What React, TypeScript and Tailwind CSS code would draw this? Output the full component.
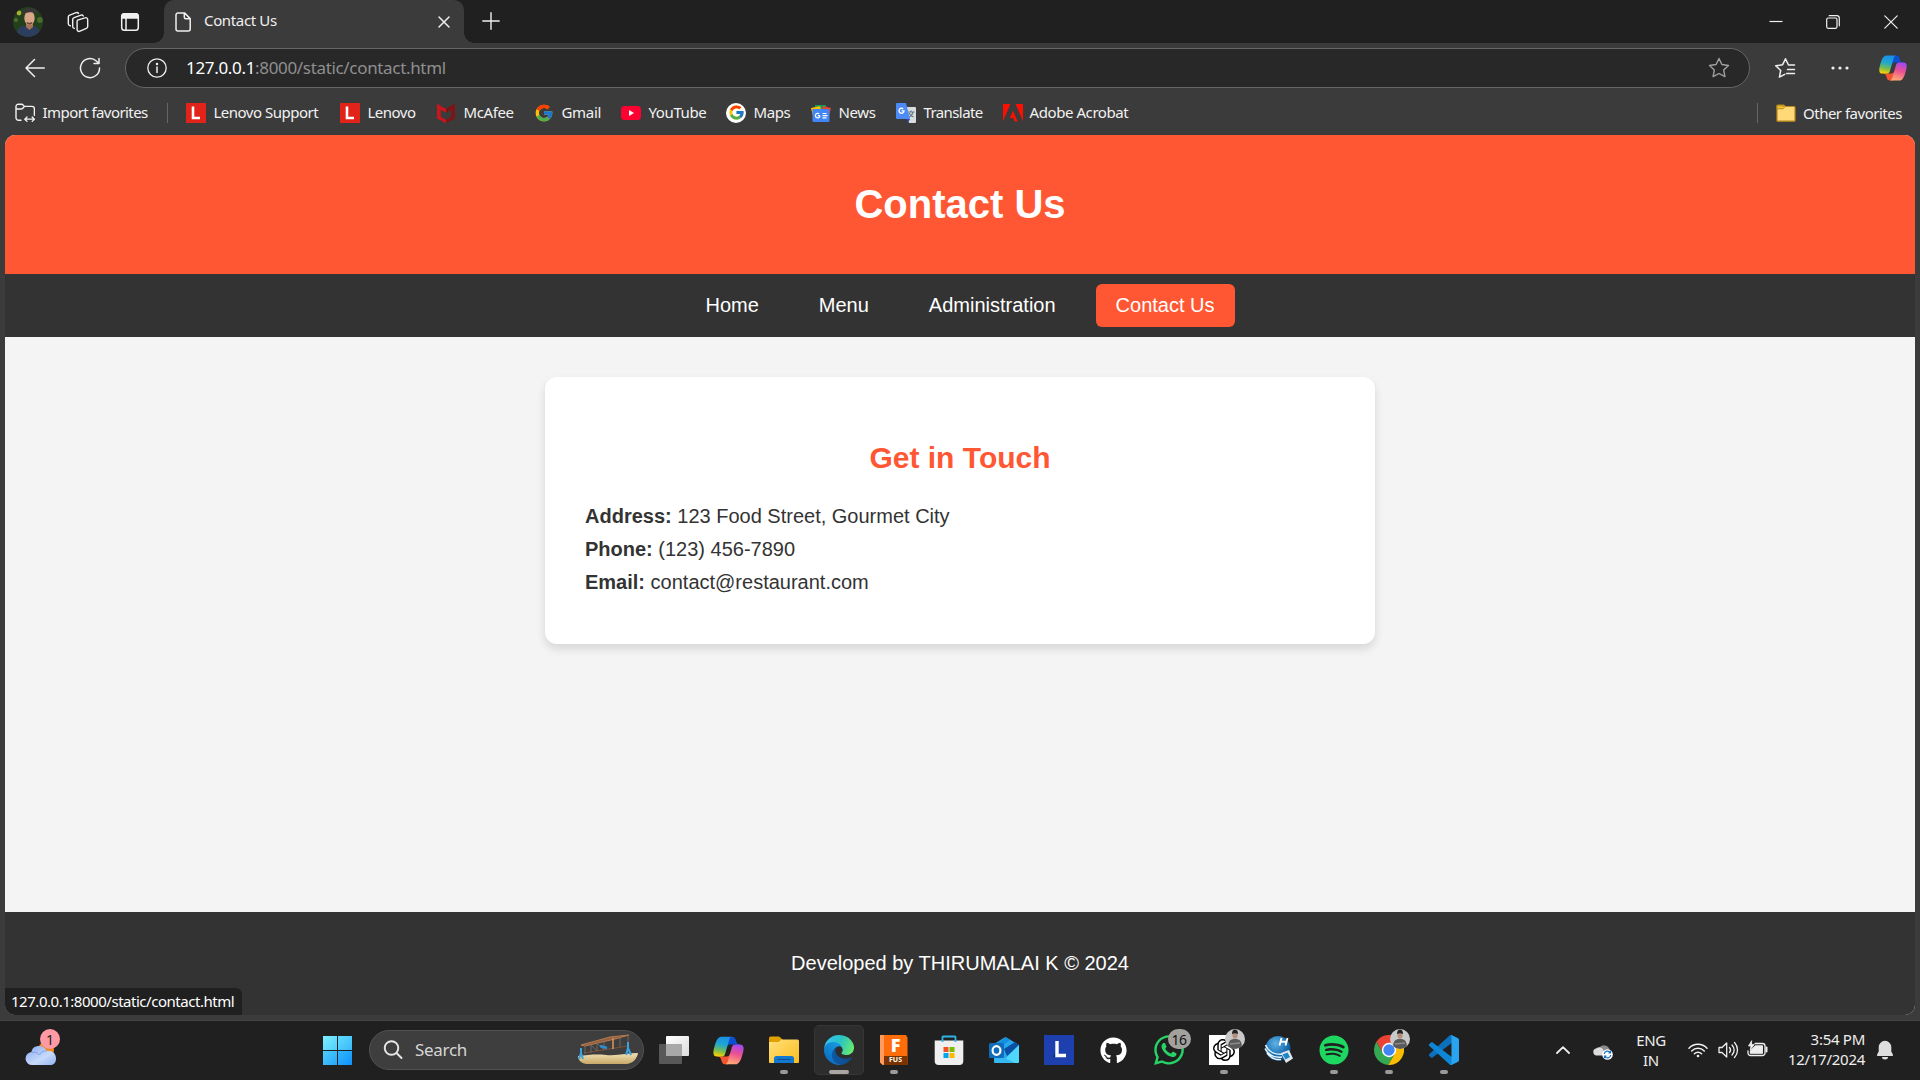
import React from "react";
import { FcGoogle } from "react-icons/fc";
import { FaGithub, FaWhatsapp, FaSpotify } from "react-icons/fa";
import { SiOpenai } from "react-icons/si";

const line = { fill: "none", stroke: "currentColor", strokeLinecap: "round", strokeLinejoin: "round" } as const;

function Copilot({ id, className }: { id: string; className: string }) {
  return (
    <svg viewBox="0 0 48 48" className={className}>
      <defs>
        <linearGradient id={id + "a"} x1="0.5" y1="0" x2="0.3" y2="1">
          <stop offset="0" stopColor="#1a8fe8" />
          <stop offset="0.4" stopColor="#20a8cf" />
          <stop offset="0.72" stopColor="#7bbd4c" />
          <stop offset="1" stopColor="#ffd400" />
        </linearGradient>
        <linearGradient id={id + "b"} x1="0.6" y1="0" x2="0.35" y2="1">
          <stop offset="0" stopColor="#a348f0" />
          <stop offset="0.45" stopColor="#ee5091" />
          <stop offset="1" stopColor="#ffae75" />
        </linearGradient>
      </defs>
      <path fill="#0d4fd0" d="M34.1 7.3A4.63 4.63 0 0 0 29.7 4h-1.35a4.63 4.63 0 0 0-4.55 3.8l-2.32 12.64.58-1.97a4.63 4.63 0 0 1 4.44-3.33h7.85l3.3 1.28 3.17-1.28h-.93a4.63 4.63 0 0 1-4.44-3.33z" />
      <path fill="#f4552f" d="M14.33 40.66A4.63 4.63 0 0 0 18.78 44h2.87a4.63 4.63 0 0 0 4.63-4.51l.31-12.16-.65 2.23a4.63 4.63 0 0 1-4.45 3.33h-7.92l-2.82-1.53-3.06 1.53h.92a4.63 4.63 0 0 1 4.44 3.34z" />
      <path fill={`url(#${id}a)`} d="M29.5 4H13.46c-4.58 0-7.33 6.06-9.17 12.11C2.12 23.29-.72 32.89 7.5 32.89h6.93c2.07 0 3.9-1.37 4.46-3.36a1060 1060 0 0 1 5.67-19.52C25.39 7.18 26.09 4 29.5 4z" />
      <path fill={`url(#${id}b)`} d="M18.5 44h16.04c4.58 0 7.33-6.06 9.16-12.12 2.17-7.17 5.02-16.77-3.2-16.77h-6.93a4.63 4.63 0 0 0-4.46 3.36 1085 1085 0 0 1-5.67 19.53c-.84 2.82-1.53 6-4.94 6z" />
    </svg>
  );
}

function Avatar() {
  return (
    <svg viewBox="0 0 30 30" className="size-[30px] rounded-full">
      <rect width="30" height="30" fill="#24401a" />
      <circle cx="6" cy="6" r="2.4" fill="#a5b032" />
      <circle cx="3" cy="13" r="2" fill="#4d6e30" />
      <circle cx="27" cy="13" r="3" fill="#4a6b2c" />
      <path d="M3 30c0-9 4-11.500 12-11.500S28 21 28 30z" fill="#2c3d5e" />
      <path d="M13 15h7v5l-3.500 3-3.500-3z" fill="#a87355" />
      <ellipse cx="16.500" cy="11" rx="5.200" ry="7" fill="#d9a689" />
      <path d="M9 7c0-4 4-6 8-6s7.500 2 7 5c-4-1.200-9-1.200-15 1z" fill="#3a3638" />
      <path d="M13.800 15c1.800 1 3.600 1 5.400 0v1.500c-1.800 1.500-3.600 1.500-5.400 0z" fill="#6b4836" />
    </svg>
  );
}

function Lenovo() {
  return (
    <svg viewBox="0 0 20 20" className="size-5">
      <rect width="20" height="20" fill="#e2231a" />
      <path d="M7 3.500V15h7" fill="none" stroke="#fff" strokeWidth="2.600" />
    </svg>
  );
}
function McAfee() {
  return (
    <svg viewBox="0 0 20 20" className="size-5">
      <path d="M1 .5 5 3v.1L10 6v3.500L4.800 7v7l5.200 2.800V20l-9-4.500z" fill="#c8161d" />
      <path d="M19 .5 10 6v3.500L15.200 7v7L10 16.800V20l9-4.500z" fill="#7e1416" />
    </svg>
  );
}
function YouTube() {
  return (
    <svg viewBox="0 0 20 20" className="size-5">
      <rect y="3" width="20" height="14" rx="3.500" fill="#ff0033" />
      <path d="M8 7v6l5-3z" fill="#fff" />
    </svg>
  );
}
function News() {
  return (
    <svg viewBox="0 0 20 20" className="size-5">
      <path d="M4 2h11v6H4z" fill="#0c9d58" />
      <path d="m0 5 9-2 4 12-10 2z" fill="#fbbc04" />
      <path d="m20 5-8-2-3 12 8 2z" fill="#ea4335" />
      <rect x="1.500" y="6" width="17" height="13" rx="1" fill="#4285f4" />
      <path d="M9 12.700H6.800M9 12.700a2.300 2.300 0 1 1-.8-1.900M11.500 10.500h4M11.500 12.700h5M11.500 14.900h4" fill="none" stroke="#fff" strokeWidth="1.200" />
    </svg>
  );
}
function Translate() {
  return (
    <svg viewBox="0 0 20 20" className="size-5">
      <path d="M8 4h11a1 1 0 0 1 1 1v14a1 1 0 0 1-1 1h-6z" fill="#dcdcdc" />
      <path d="M11.500 9h7M15 7.500V9m2 0c-.5 2.500-2 4-4 5m0-4c1 2 2.500 3.500 4.500 4" fill="none" stroke="#5f7d86" strokeWidth="1.200" />
      <path d="M1 0h9l4 16H1a1 1 0 0 1-1-1V1a1 1 0 0 1 1-1z" fill="#4c8bf5" />
      <path d="m10.500 16h3.500l-2 4z" fill="#3247a8" />
      <path d="M5.600 7.800H8a2.500 2.500 0 1 1-.8-1.900" fill="none" stroke="#fff" strokeWidth="1.300" />
    </svg>
  );
}
function Adobe() {
  return (
    <svg viewBox="0 0 20 20" className="size-5">
      <path d="M0 1h7.400L0 18.500zM12.600 1H20v17.500zM10 7.500l4.700 11h-3.100l-1.400-3.500H6.800z" fill="#fa0f00" />
    </svg>
  );
}
function ImportIcon() {
  return (
    <svg viewBox="0 0 20 20" className="size-5" {...line} strokeWidth="1.400">
      <path d="M6 17.300H3.500a2.500 2.500 0 0 1-2.500-2.500V3.500A2.300 2.300 0 0 1 3.300 1.200h3.200c.8 0 1.500.6 2 1.200l.9 1H17a2.400 2.400 0 0 1 2.400 2.400v6.500M1 6h4.800c.8 0 1.500-.2 2-.8l1.500-1.700" />
      <path d="M10 16.200h9M12 14l-2.200 2.200L12 18.400M17.200 14l2.200 2.200-2.200 2.200" strokeWidth="1.300" />
    </svg>
  );
}

const bookmarks = [
  { label: "Import favorites", icon: <ImportIcon />, w: "w-[152px]", t: "tracking-[-0.57px]" },
  { label: "Lenovo Support", icon: <Lenovo />, w: "w-[154px]", t: "tracking-[-0.5px]" },
  { label: "Lenovo", icon: <Lenovo />, w: "w-[95px]", t: "tracking-[-0.5px]" },
  { label: "McAfee", icon: <McAfee />, w: "w-[99px] pl-px", t: "tracking-[-0.4px]" },
  { label: "Gmail", icon: <FcGoogle className="size-5" />, w: "w-[87px]", t: "tracking-[-0.3px]" },
  { label: "YouTube", icon: <YouTube />, w: "w-[105px]", t: "tracking-[-0.4px]" },
  {
    label: "Maps",
    icon: (
      <span className="flex size-5 items-center justify-center rounded-full bg-white">
        <FcGoogle className="size-[17px]" />
      </span>
    ),
    w: "w-[85px]",
    t: "tracking-[-0.4px]",
  },
  { label: "News", icon: <News />, w: "w-[85px]", t: "tracking-[-0.4px]" },
  { label: "Translate", icon: <Translate />, w: "w-[107px]", t: "tracking-[-0.6px]" },
  { label: "Adobe Acrobat", icon: <Adobe />, w: "w-[140px]", t: "tracking-[-0.42px] -ml-px" },
];

function TitleBar() {
  return (
    <div className="flex h-[43px] bg-[#202020] text-[#f0f0f0]">
      <div className="flex w-[164px] items-center pl-[13px]">
        <Avatar />
        <svg viewBox="0 0 22 22" className="ml-6 size-[22px]" {...line} strokeWidth="1.400">
          <path d="m10.500 9.200 7.500-2.400a2 2 0 0 1 2.700 1.900v6.800a2 2 0 0 1-1.300 1.900l-6.400 2.800a2 2 0 0 1-2.900-1.900V11a2 2 0 0 1 .4-1.800z" />
          <path d="M7.300 17.400c-1-.2-1.600-1-1.600-2V8.600c0-.9.600-1.700 1.400-2L14 4.200c.9-.3 1.800 0 2.300.8" />
          <path d="M3.300 14.800C2 14.500 1.300 13.700 1.300 12.700V6.100c0-.9.600-1.700 1.400-2l6.400-2.500c1-.3 2 0 2.400.8" />
        </svg>
        <svg viewBox="0 0 20 20" className="ml-[31px] size-5" {...line} strokeWidth="1.500">
          <rect x="1.700" y="1.700" width="16.600" height="16.600" rx="2.800" />
          <path d="M1.700 6V4.500a2.800 2.800 0 0 1 2.800-2.800h11a2.800 2.800 0 0 1 2.800 2.800V6z" fill="currentColor" />
          <path d="M6 6v12" />
        </svg>
      </div>
      <div className="relative flex w-[300px] items-center rounded-t-[10px] bg-[#3b3b3b] pl-[11px]">
        <div className="absolute bottom-0 -left-[10px] size-[10px] bg-[radial-gradient(circle_at_0_0,#202020_9.500px,#3b3b3b_10px)]" />
        <div className="absolute -right-[10px] bottom-0 size-[10px] bg-[radial-gradient(circle_at_100%_0,#202020_9.500px,#3b3b3b_10px)]" />
        <svg viewBox="0 0 16 20" className="h-5 w-4" {...line} strokeWidth="1.500">
          <path d="M3 .9h6.500l5.700 5.700V17a2 2 0 0 1-2 2H3a2 2 0 0 1-2-2V2.900a2 2 0 0 1 2-2zM9.300 1v4.300c0 .9.600 1.500 1.500 1.500H15" />
        </svg>
        <span className="ml-[13px] w-[234px] pb-0.5 text-[15px] whitespace-nowrap tracking-[-0.35px]">Contact Us</span>
        <svg viewBox="0 0 12 12" className="mt-px size-3" {...line} strokeWidth="1.500">
          <path d="m1 1 10 10M11 1 1 11" />
        </svg>
      </div>
      <svg viewBox="0 0 18 18" className="mt-3 ml-[18px] size-[18px]" {...line} strokeWidth="1.400">
        <path d="M9 .8v16.400M.8 9h16.400" />
      </svg>
      <div className="ml-auto flex items-center pr-[22px]">
        <svg viewBox="0 0 14 14" className="size-3.5" stroke="currentColor" strokeWidth="1.200">
          <path d="M.5 6.500h13" />
        </svg>
        <svg viewBox="0 0 14 14" className="ml-[43px] size-3.5" {...line} strokeWidth="1.200">
          <rect x=".7" y="3" width="10.300" height="10.300" rx="1.500" />
          <path d="M3.200.7h7.500a2.600 2.600 0 0 1 2.600 2.600v7.500" />
        </svg>
        <svg viewBox="0 0 14 14" className="ml-11 size-3.5" {...line} strokeWidth="1.200">
          <path d="m.8.8 12.400 12.400M13.200.8.8 13.200" />
        </svg>
      </div>
    </div>
  );
}

function Toolbar() {
  return (
    <div className="flex h-[50px] items-center text-[#efefef]">
      <svg viewBox="0 0 20 20" className="mb-px ml-[25px] size-5" {...line} strokeWidth="1.500">
        <path d="M19.300 10H1M9.500 1.500 1 10l8.500 8.500" />
      </svg>
      <svg viewBox="0 0 22 22" className="ml-[34px] size-[22px]" {...line} strokeWidth="1.500">
        <path d="M20.500 11A9.500 9.500 0 1 1 17.300 4L20 6.500M20 1.500v5h-5" />
      </svg>
      <div className="ml-[24px] flex h-10 w-[1625px] items-center rounded-full border border-[#666] bg-[#282828]">
        <svg viewBox="0 0 20 20" className="ml-[21px] size-5" {...line} strokeWidth="1.300">
          <circle cx="10" cy="10" r="9.200" />
          <path d="M10 9v5.500" strokeWidth="1.500" />
          <circle cx="10" cy="6" r=".6" fill="currentColor" />
        </svg>
        <span className="ml-[19px] w-[300px] pb-px text-[17px] whitespace-nowrap tracking-[-0.33px] text-[#8f8f8f]">
          <span className="text-white">127.0.0.1</span>:8000/static/contact.html
        </span>
        <svg viewBox="0 0 22 22" className="mr-[19px] ml-auto size-[22px] text-[#a0a0a0]" {...line} strokeWidth="1.400">
          <path d="m11 1.500 2.900 6 6.600 1-4.800 4.600 1.200 6.500L11 16.500l-5.900 3.100 1.200-6.500L1.500 8.500l6.600-1z" />
        </svg>
      </div>
      <svg viewBox="0 0 22 22" className="ml-6 size-[22px]" {...line} strokeWidth="1.500">
        <path d="M20.500 8h-6l-3-6.200-3 6-6.800 1 5 4.700-1.300 6.600 5.300-2.800M13.500 12.500h7M12.500 16.500h8" />
      </svg>
      <svg viewBox="0 0 18 4" className="ml-[35px] h-1 w-[18px]" fill="currentColor">
        <circle cx="2" cy="2" r="1.600" />
        <circle cx="9" cy="2" r="1.600" />
        <circle cx="16" cy="2" r="1.600" />
      </svg>
      <Copilot id="bar" className="ml-[29px] size-[30px]" />
    </div>
  );
}

function FavoritesBar() {
  return (
    <div className="flex h-[42px] items-center pb-[3px] pl-[15px] text-[15px] whitespace-nowrap text-[#f2f2f2]">
      {bookmarks.map((b, i) => (
        <React.Fragment key={b.label}>
          <div className={`flex shrink-0 items-center gap-[7.500px] ${b.w}`}>
            {b.icon}
            <span className={`${b.t} leading-5 -mt-0.5`}>{b.label}</span>
          </div>
          {i === 0 && <div className="mr-[18px] h-5 w-px bg-[#666]" />}
        </React.Fragment>
      ))}
      <div className="ml-auto h-5 w-px bg-[#666]" />
      <svg viewBox="0 0 20 18" className="ml-[18px] h-[18px] w-5">
        <path d="M1 2a1 1 0 0 1 1-1h5.500L9.500 2.500H18a1 1 0 0 1 1 1v13a.7.700 0 0 1-.7.700H1.700a.7.700 0 0 1-.7-.7z" fill="#ffd978" stroke="#b98a1c" strokeWidth="1.200" />
        <path d="M1 1.800h6l1.500 1.500L7 4.800H1z" fill="#f5c42c" stroke="#b98a1c" strokeWidth="1" />
      </svg>
      <span className="mr-[15px] ml-[7px] w-[102px] leading-5 tracking-[-0.5px]">Other favorites</span>
    </div>
  );
}

function Page() {
  const link = "rounded-[6px] px-5 py-2.5 leading-[23px]";
  return (
    <div className="relative mx-[5px] flex h-[880px] flex-col overflow-hidden rounded-[10px] bg-[#f4f4f4] font-['Liberation_Sans',Arial,sans-serif] text-xl text-white">
      <header className="flex h-[139px] items-center justify-center bg-[#ff5733] pb-0.5">
        <h1 className="text-[40px] leading-[46px] font-bold">Contact Us</h1>
      </header>
      <nav className="flex h-[63px] items-center justify-center gap-5 bg-[#333]">
        <a className={link}>Home</a>
        <a className={link}>Menu</a>
        <a className={link}>Administration</a>
        <a className={`${link} bg-[#ff5733]`}>Contact Us</a>
      </nav>
      <main className="flex-1 pt-10">
        <section className="mx-auto h-[267px] w-[830px] rounded-[12px] bg-white px-10 pt-[62px] text-[#333] shadow-[0_5px_10px_rgba(0,0,0,0.12)]">
          <h2 className="text-center text-[30px] leading-[38px] font-bold text-[#ff5733]">Get in Touch</h2>
          <div className="mt-[23px] leading-[33px]">
            <p><b>Address:</b> 123 Food Street, Gourmet City</p>
            <p><b>Phone:</b> (123) 456-7890</p>
            <p><b>Email:</b> contact@restaurant.com</p>
          </div>
        </section>
      </main>
      <footer className="h-[103px] bg-[#333] pt-10 text-center leading-[23px]">Developed by THIRUMALAI K © 2024</footer>
      <div className="absolute bottom-0 left-0 h-[27px] w-[237px] rounded-tr-[6px] bg-[#202020] pl-1.5 font-['Noto_Sans',sans-serif] text-[15px] leading-[26px] whitespace-nowrap tracking-[-0.47px]">
        127.0.0.1:8000/static/contact.html
      </div>
    </div>
  );
}

function Edge() {
  return (
    <svg viewBox="0 0 256 256" className="size-[30px]">
      <defs>
        <linearGradient id="e1" x1="0" y1="0.5" x2="1" y2="0.5"><stop offset="0" stopColor="#0c59a4" /><stop offset="1" stopColor="#114a8b" /></linearGradient>
        <linearGradient id="e2" x1="0.8" y1="0" x2="0.2" y2="1"><stop offset="0" stopColor="#1b9de2" /><stop offset="0.6" stopColor="#0d7fd0" /><stop offset="1" stopColor="#1266b8" /></linearGradient>
        <linearGradient id="e3" x1="0" y1="0.3" x2="1" y2="0.6"><stop offset="0" stopColor="#35c1f1" /><stop offset="0.5" stopColor="#2ac3c4" /><stop offset="1" stopColor="#66eb6e" /></linearGradient>
      </defs>
      <path fill="url(#e1)" d="M231 190.500c-3.400 1.800-6.900 3.400-10.500 4.700a101.800 101.800 0 0 1-35.900 6.400c-47.300 0-88.500-32.500-88.500-74.300.1-11.400 6.400-21.900 16.400-27.300-42.800 1.800-53.800 46.400-53.800 72.500 0 73.900 68.100 81.400 82.800 81.400 7.900 0 19.800-2.300 27-4.600l1.300-.4a128.300 128.300 0 0 0 66.600-52.800 4 4 0 0 0-5.400-5.600z" />
      <path fill="url(#e2)" d="M105.700 241.400a79.200 79.200 0 0 1-22.700-21.300A80.700 80.700 0 0 1 112.500 100c3.100-1.500 8.500-4.100 15.600-4 10.100.1 19.600 4.900 25.700 13a31.900 31.900 0 0 1 6.300 18.700c0-.2 24.500-79.600-80-79.600-43.900 0-80 41.700-80 78.200-.2 19.300 4 38.500 12.100 56 27.600 58.800 94.800 87.600 156.400 67.100a75.500 75.500 0 0 1-62.800-8.100z" />
      <path fill="url(#e3)" d="M152.300 148.900c-.9 1-3.400 2.500-3.400 5.600 0 2.600 1.700 5.200 4.800 7.300 14.400 10.100 41.700 8.700 41.800 8.700 10.700 0 21.200-2.900 30.500-8.300a61.800 61.800 0 0 0 30.400-53.100c.3-22.400-8-37.300-11.300-43.900C223.900 23.500 177.700 0 128 0A128 128 0 0 0 0 126.200c.5-36.500 36.800-66 80-66 3.500 0 23.500.3 42 10.100 16.300 8.600 24.900 18.900 30.800 29.200 6.200 10.700 7.300 24.100 7.300 29.500s-2.700 13.300-7.800 19.900z" />
    </svg>
  );
}
function TaskView() {
  return (
    <svg viewBox="0 0 30 28" className="h-7 w-[30px]">
      <defs>
        <linearGradient id="tv" x1="0" y1="0" x2="1" y2="1"><stop offset="0" stopColor="#fff" /><stop offset="1" stopColor="#ddd" /></linearGradient>
      </defs>
      <rect x="7" width="23" height="20" rx="1" fill="url(#tv)" />
      <rect y="8" width="23" height="20" rx="1" fill="#585858" />
      <rect x="7" y="8" width="16" height="12" fill="#a8a8a8" />
    </svg>
  );
}
function Folder() {
  return (
    <svg viewBox="0 0 30 28" className="h-7 w-[30px]">
      <defs>
        <linearGradient id="fo" x1="0" y1="0" x2="1" y2="1"><stop offset="0" stopColor="#ffe07c" /><stop offset="1" stopColor="#fbbd1e" /></linearGradient>
      </defs>
      <path d="M0 2a1.500 1.500 0 0 1 1.500-1.500h8c.8 0 1.300.4 1.800 1L14 4v6H0z" fill="#e0a100" />
      <path d="M0 6h9.500l3-2.500h16A1.500 1.500 0 0 1 30 5v21a1 1 0 0 1-1 1H1a1 1 0 0 1-1-1z" fill="url(#fo)" />
      <path d="M5 27v-4.500A2.500 2.500 0 0 1 7.500 20h15a2.500 2.500 0 0 1 2.500 2.500V27z" fill="#1277cf" />
      <path d="M9 23.500h12" stroke="#0b4f91" strokeWidth="1.200" strokeLinecap="round" />
    </svg>
  );
}
function Fusion() {
  return (
    <div className="relative flex h-[30px] w-7 flex-col bg-[#ff6d0a] [clip-path:polygon(0_0,94%_0,100%_8%,100%_100%,12%_100%,0_90%)]">
      <div className="absolute inset-y-0 left-0 w-1 bg-[#ff9b5c]" />
      <span className="h-[21px] pl-1 text-center font-['Open_Sans',sans-serif] text-[18px] leading-[21px] font-extrabold text-white">F</span>
      <span className="ml-1 h-[9px] bg-[#7a3300] text-center text-[7px] leading-[8.500px] font-bold text-white">FUS</span>
    </div>
  );
}
function Store() {
  return (
    <svg viewBox="0 0 30 30" className="size-[30px]">
      <path d="M.7 5.500h28.600V26a4 4 0 0 1-4 4H4.700a4 4 0 0 1-4-4z" fill="#efefef" />
      <path d="M8.500 7V2.200A.7.700 0 0 1 9.200 1.500h11.600a.7.700 0 0 1 .7.700V7" fill="none" stroke="#2fb4ea" strokeWidth="1.800" />
      <path d="M9.500 12h5v5h-5z" fill="#f25022" />
      <path d="M15.500 12h5v5h-5z" fill="#7fba00" />
      <path d="M9.500 18h5v5h-5z" fill="#00a4ef" />
      <path d="M15.500 18h5v5h-5z" fill="#ffb900" />
    </svg>
  );
}
function Outlook() {
  return (
    <svg viewBox="0 0 30 28" className="h-7 w-[30px]">
      <path d="M5 8 15.500 1.500a2 2 0 0 1 2 0L30 9v16.500a1.500 1.500 0 0 1-1.500 1.500h-22A1.500 1.500 0 0 1 5 25.500z" fill="#28a8ea" />
      <path d="m8 7 9-5.500 4 2.500-12 9z" fill="#1490df" />
      <path d="m15 13 11-7 4 3-12 11z" fill="#0a4fa3" />
      <path d="M30 9v16.500a1.500 1.500 0 0 1-1.500 1.500H12z" fill="#4fd8fb" />
      <path d="M5 20h7l14 7H6.500A1.500 1.500 0 0 1 5 25.500z" fill="#35b8f1" />
      <rect y="7" width="15" height="15" rx="1.500" fill="#0f6cbd" />
      <ellipse cx="7.500" cy="14.500" rx="3.900" ry="4.400" fill="none" stroke="#fff" strokeWidth="2.200" />
    </svg>
  );
}
function LApp() {
  return (
    <svg viewBox="0 0 30 30" className="size-[30px]">
      <rect width="30" height="30" fill="#1e3fae" />
      <path d="m9 22 2-4v4z" fill="#0e2a56" />
      <path d="M13 6v14.500h9" fill="none" stroke="#fff" strokeWidth="3.400" />
    </svg>
  );
}
function HApp() {
  return (
    <svg viewBox="0 0 30 30" className="size-[30px]">
      <defs>
        <radialGradient id="hg" cx="0.4" cy="0.3" r="0.8"><stop offset="0" stopColor="#5fb2e6" /><stop offset="0.6" stopColor="#1a6fb0" /><stop offset="1" stopColor="#0b3c6d" /></radialGradient>
      </defs>
      <circle cx="14" cy="13.500" r="12.500" fill="url(#hg)" />
      <path d="M1.500 10c3 7 10 10 18 9M1 13.500c3 6 9 9.500 17 8.500M3 18c3 4 8 7 14 6.500" fill="none" stroke="#e8f3fb" strokeWidth="1.500" />
      <path d="m17.500 3-2 7.500M23.500 3l-2 7.500M17 6.800h5.500" stroke="#fff" strokeWidth="1.900" />
      <path d="m17 18 8-3 4 8.500-7 4.500z" fill="#dfe7ec" />
      <path d="m18.500 19.500 5-2 2.500 4.500-4.500 2.500z" fill="#1e86c4" />
    </svg>
  );
}
function Chrome() {
  return (
    <svg viewBox="2 2 44 44" className="size-[30px]">
      <path fill="#ea4335" d="M24 14h19.600A22 22 0 0 0 5.540 12.030L15.340 29 24 24z" />
      <path fill="#34a853" d="M15.340 29 5.540 12.030A22 22 0 0 0 22.860 45.970L32.660 29 24 24z" />
      <path fill="#fbbc04" d="M32.660 29l-9.800 16.970A22 22 0 0 0 43.600 14H24v10z" />
      <circle cx="24" cy="24" r="10.500" fill="#fff" />
      <circle cx="24" cy="24" r="8.300" fill="#4285f4" />
    </svg>
  );
}
function VSCode() {
  return (
    <svg viewBox="0 0 100 100" className="size-[30px]">
      <path fill="#0b70bd" d="M96.460 10.800 75.860.88c-2.390-1.150-5.240-.67-7.110 1.200L1.300 63.580c-1.810 1.650-1.810 4.510 0 6.160l5.510 5.010c1.490 1.350 3.720 1.450 5.320.24L93.360 13.370c2.720-2.070 6.640-.12 6.640 3.300 0-2.650-1.380-4.830-3.540-5.870z" />
      <path fill="#0f85d6" d="m96.460 89.200-20.600 9.920c-2.390 1.150-5.240.67-7.110-1.200L1.300 36.420c-1.810-1.650-1.810-4.510 0-6.160l5.510-5.010c1.490-1.350 3.720-1.450 5.320-.24l81.230 61.620c2.720 2.070 6.640.12 6.640-3.300 0 2.650-1.380 4.830-3.540 5.870z" />
      <path fill="#2aa4f0" d="M75.860 99.130c-2.390 1.150-5.250.67-7.120-1.210 2.310 2.310 6.260.67 6.260-2.590V4.670c0-3.260-3.950-4.900-6.260-2.590 1.880-1.870 4.730-2.350 7.120-1.210l20.600 9.910c2.170 1.040 3.540 3.230 3.540 5.640v67.160c0 2.400-1.380 4.600-3.540 5.640z" />
    </svg>
  );
}
function Person() {
  return (
    <svg viewBox="0 0 20 20" className="absolute -top-1.5 -right-1.5 size-5 rounded-full">
      <rect width="20" height="20" fill="#c9c9c9" />
      <path d="M3 20c0-8 2-10 7-10s7 2 7 10z" fill="#5a5a5a" />
      <ellipse cx="10" cy="6" rx="2.600" ry="3.800" fill="#b58f7d" />
      <path d="M7 5c0-3 1-4.500 3-4.500S13 2 13 5c-2-1-4-1-6 0z" fill="#222" />
      <path d="m5 15 10-1" stroke="#8a8a8a" strokeWidth="1.500" />
    </svg>
  );
}

const apps: { icon: React.ReactNode; mark?: "dot" | "active" }[] = [
  { icon: <TaskView /> },
  { icon: <Copilot id="tb" className="size-[33px] shrink-0" /> },
  { icon: <Folder />, mark: "dot" },
  { icon: <Edge />, mark: "active" },
  { icon: <Fusion />, mark: "dot" },
  { icon: <Store /> },
  { icon: <Outlook /> },
  { icon: <LApp /> },
  { icon: <FaGithub className="size-[27px] text-white" /> },
  {
    icon: (
      <>
        <FaWhatsapp className="size-[34px] shrink-0 text-[#25d366]" />
        <span className="absolute -top-1.5 -right-[7px] flex h-5 w-[23px] items-center justify-center rounded-full bg-[#a3a19e] text-[14px] tracking-[-0.5px] text-[#111]">16</span>
      </>
    ),
  },
  {
    icon: (
      <>
        <span className="flex size-[30px] items-center justify-center bg-white">
          <SiOpenai className="size-[22px] text-black" />
        </span>
        <Person />
      </>
    ),
    mark: "dot",
  },
  { icon: <HApp /> },
  { icon: <FaSpotify className="size-[30px] text-[#1ed760]" />, mark: "dot" },
  { icon: <><Chrome /><Person /></>, mark: "dot" },
  { icon: <VSCode />, mark: "dot" },
];

function SearchBox() {
  return (
    <div className="flex h-10 w-[275px] items-center rounded-full border border-[#525252] bg-[#3e3e3e] pr-1 pl-3.5">
      <svg viewBox="0 0 20 20" className="-ml-px size-5 text-[#e6e6e6]" {...line} strokeWidth="1.900">
        <circle cx="8.500" cy="8" r="6.800" />
        <path d="m13.500 13 5 5" />
      </svg>
      <span className="ml-3 text-[17px] tracking-[-0.3px] text-[#d6d6d6]">Search</span>
      <svg viewBox="0 0 62 32" className="ml-auto h-8 w-[62px]" fill="none">
        <defs>
          <linearGradient id="sand" x1="0" y1="0" x2="0" y2="1"><stop offset="0" stopColor="#f1e0b4" /><stop offset="1" stopColor="#c9a968" /></linearGradient>
        </defs>
        <path d="M1 22c10-1 18-2 28-1 12 1 22-2 32-2-1 6-5 10-11 11H9C4 29 1 26 1 22z" fill="url(#sand)" />
        <path d="m4 11 29-8 19-2-12 3.500-32 7.500z" fill="#8f5f3f" stroke="#b97b4e" strokeWidth="1" />
        <path d="M7 19 51 12" stroke="#7a5138" strokeWidth="1.200" />
        <path d="M8 11v9M14 10v9M20 8v9M27 7v9M43 2v11M51 1v12M14 11l6 6M20 9l7 7" stroke="#77706a" strokeWidth=".8" />
        <path d="M36 4v11" stroke="#d2935c" strokeWidth="1.600" />
        <path d="m23 12 7 2" stroke="#2e8fd0" strokeWidth="2.500" />
        <path d="M4 14v5l-2 6M4 19l2 6M51 8v6l-2 7M51 14l3 7" stroke="#3aa2e0" strokeWidth="2" />
      </svg>
    </div>
  );
}

function Taskbar() {
  return (
    <div className="flex h-[60px] items-center border-t border-[#454545] bg-[#202020] pb-px text-[#eee]">
      <div className="w-[323px] pl-[25px]">
        <div className="relative mb-1.5 h-[38px] w-9">
          <svg viewBox="0 0 36 38" className="h-[38px] w-9">
            <defs>
              <linearGradient id="cl" x1="0" y1="0" x2="1" y2="1"><stop offset="0" stopColor="#86a8ee" /><stop offset="0.6" stopColor="#c6dafb" /><stop offset="1" stopColor="#8fb2f2" /></linearGradient>
            </defs>
            <circle cx="21" cy="22" r="8" fill="#f28a1c" />
            <path d="M7.500 37a6.500 6.500 0 0 1-1-13C7 20 10 18 14 18c4 0 6.500 2 7.500 5 5-1 9.500 2 9.500 7.500 0 4-2 6.500-5.500 6.500z" fill="url(#cl)" />
            <path d="M7 24.500c3-.8 6 .2 7.500 2.500M14.500 27c1-3 4-4.500 7-4" fill="none" stroke="#7fa0e4" strokeWidth="1" />
          </svg>
          <span className="absolute top-px right-[1px] flex size-5 items-center justify-center rounded-full bg-[#ff99a4] text-[14px] text-[#222]">1</span>
        </div>
      </div>
      <div className="grid size-[29px] grid-cols-2 gap-px">
        <div className="bg-linear-to-br from-[#7cf0ff] to-[#4fcdfb]" />
        <div className="bg-linear-to-br from-[#5fdcff] to-[#38b9fa]" />
        <div className="bg-linear-to-br from-[#4fcffc] to-[#27a6fa]" />
        <div className="bg-linear-to-br from-[#34b7fb] to-[#0a93fb]" />
      </div>
      <div className="ml-[17px]">
        <SearchBox />
      </div>
      <div className="ml-0.5 flex">
        {apps.map((a, i) => (
          <div key={i} className="flex h-[50px] w-[55px] justify-center">
            <div className={`relative flex h-[50px] w-[50px] items-center justify-center ${a.mark === "active" ? "rounded-[5px] border border-[#363636] bg-[#2d2d2d]" : ""}`}>
              <div className="relative flex size-[30px] items-center justify-center">{a.icon}</div>
              {a.mark === "dot" && <div className="absolute bottom-px h-1 w-2 rounded-full bg-[#9a9a9a]" />}
              {a.mark === "active" && <div className="absolute bottom-0 h-1 w-5 rounded-full bg-[#a9a6a3]" />}
            </div>
          </div>
        ))}
      </div>
      <div className="ml-auto flex items-center">
        <svg viewBox="0 0 14 8" className="h-2 w-3.5" {...line} strokeWidth="1.800">
          <path d="m1 7 6-5.800L13 7" />
        </svg>
        <svg viewBox="0 0 20 18" className="ml-[23px] mt-0.5 h-[18px] w-5">
          <path d="M6 6a6 6 0 0 1 10.500 1v5H8z" fill="#8c8c8c" />
          <path d="M3.500 13.500A3.500 3.500 0 0 1 3 6.600a4.500 4.500 0 0 1 7.500 1.900v5z" fill="#dcdcdc" />
          <circle cx="14.500" cy="12.500" r="5.300" fill="#fff" />
          <path d="M11.300 12a3.300 3.300 0 0 1 6-1.500M17.700 13a3.300 3.300 0 0 1-6 1.500M17.500 8.800v2h-2M11.500 16.200v-2h2" fill="none" stroke="#1272c8" strokeWidth="1.200" />
        </svg>
        <div className="mb-px ml-[18px] w-10 text-center text-[15px] leading-5 tracking-[-0.35px]">
          ENG
          <br />
          IN
        </div>
        <svg viewBox="0 0 20 16" className="ml-[17px] h-4 w-5" {...line} strokeWidth="1.500">
          <path d="M1 6.200a12.500 12.500 0 0 1 18 0M3.700 9a8.800 8.800 0 0 1 12.600 0M6.400 11.700a5 5 0 0 1 7.200 0" />
          <circle cx="10" cy="14" r="1.300" fill="currentColor" stroke="none" />
        </svg>
        <svg viewBox="0 0 21 18" className="ml-2.5 h-[18px] w-[21px]" {...line} strokeWidth="1.300">
          <path d="M1 6.500h3L8.700 2v14L4 11.500H1zM11.500 6.500c1.300 1.500 1.300 3.500 0 5M14 4c2.600 3 2.600 7 0 10M16.500 1.500c4 4.300 4 10.700 0 15" />
        </svg>
        <svg viewBox="0 0 21 18" className="mb-0.5 ml-2 h-[18px] w-[21px]" {...line} strokeWidth="1.300">
          <path d="M8 3.500h7.500A2.500 2.500 0 0 1 18 6v7a2.500 2.500 0 0 1-2.500 2.500h-12A2.500 2.500 0 0 1 1 13v-2" />
          <path d="M8.500 6h6.800v7.200H3.500V11z" fill="currentColor" />
          <path d="M19.500 7.500v4" strokeWidth="2" />
          <path d="M4.500 1 1.500 6H4l-.8 4 4-5.500H4.800z" fill="currentColor" strokeWidth=".8" />
        </svg>
        <div className="mb-[3px] ml-3.5 w-[83px] text-right text-[15px] leading-5 whitespace-nowrap tracking-[-0.28px]">
          3:54 PM
          <br />
          12/17/2024
        </div>
        <svg viewBox="0 0 18 20" className="mr-[26px] ml-[11px] h-5 w-[18px]" fill="#dedede">
          <path d="M9 .8a6.300 6.300 0 0 1 6.300 6.300v4.400l1.700 3.300c.3.600-.1 1.200-.7 1.200H1.700c-.6 0-1-.6-.7-1.200l1.700-3.300V7.100A6.300 6.300 0 0 1 9 .8zM6 17h6a3 2.500 0 0 1-6 0z" />
        </svg>
      </div>
    </div>
  );
}

export default function App() {
  return (
    <div className="flex h-[1080px] w-[1920px] flex-col overflow-hidden bg-[#3b3b3b] font-['Noto_Sans','Open_Sans',sans-serif]">
      <TitleBar />
      <Toolbar />
      <FavoritesBar />
      <Page />
      <div className="h-[5px]" />
      <Taskbar />
    </div>
  );
}
